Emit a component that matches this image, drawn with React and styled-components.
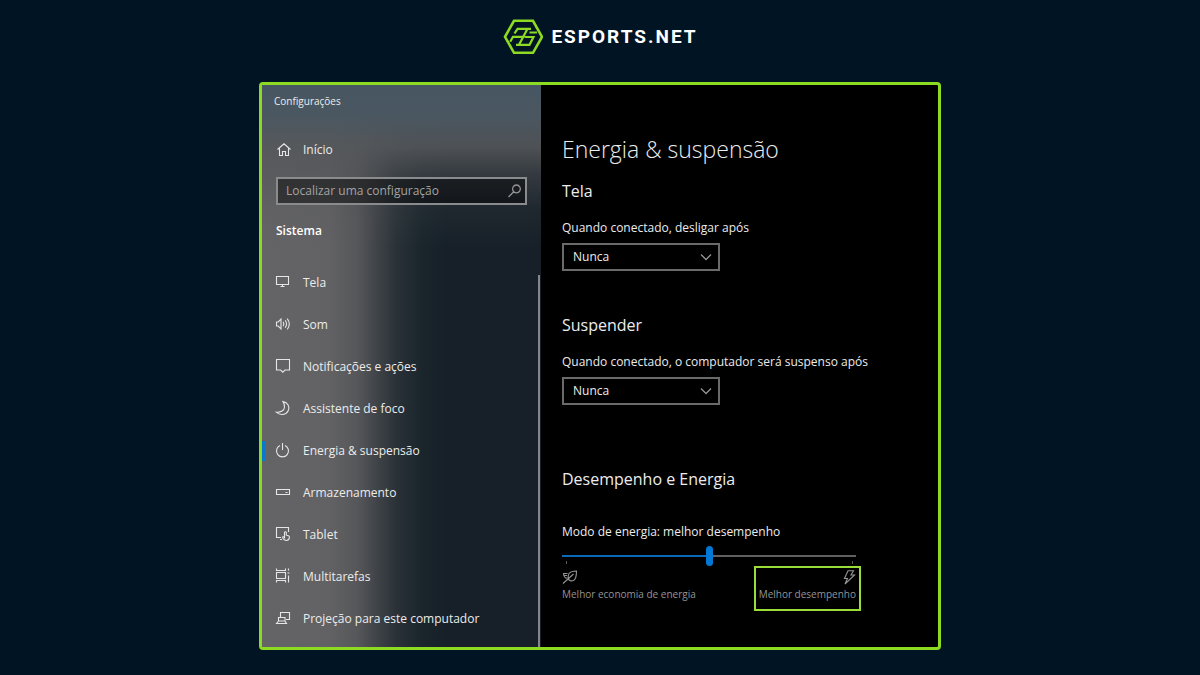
import React from "react";
import styled, { createGlobalStyle } from "styled-components";

const GlobalStyle = createGlobalStyle`
  *, *::before, *::after { box-sizing: border-box; }
  body {
    margin: 0;
    background: #011424;
    color: #ececec;
    font-family: "Open Sans", "Noto Sans", sans-serif;
    font-size: 12px;
    line-height: 20px;
  }
  h1, h2, p { margin: 0; font-weight: 400; }
  input, select { font: inherit; color: inherit; }
`;

const Page = styled.div`
  display: flex;
  flex-direction: column;
  align-items: center;
  padding: 17px 16px 24px;
`;

const Brand = styled.a`
  display: flex;
  align-items: center;
  gap: 8px;
  color: #fff;
  text-decoration: none;
`;

const BrandName = styled.span`
  font-family: Roboto, sans-serif;
  font-size: 19px;
  font-weight: 700;
  letter-spacing: 2px;
  line-height: 24px;
`;

const Window = styled.div`
  display: grid;
  grid-template-columns: 279px minmax(0, 1fr);
  width: 100%;
  max-width: 682px;
  margin-top: 25px;
  border: 3px solid #8cdb22;
  border-radius: 4px;
  background: #000;
`;

const Sidebar = styled.aside`
  display: flex;
  flex-direction: column;
  background:
    linear-gradient(to bottom, #465662 0, #4a5761 5%, rgba(84, 87, 90, 0.9) 11%, rgba(80, 82, 86, 0.5) 16%, rgba(80, 82, 86, 0.15) 22%, rgba(80, 82, 86, 0) 29%),
    linear-gradient(to right, #646466 0, #626264 24%, #56575a 34%, #404448 41%, #2a3238 48%, #1a252c 57%, #172028 66%, #172028 100%);
`;

const AppTitle = styled.p`
  padding: 8px 12px 0;
  font-size: 10px;
  line-height: 16px;
`;

const NavLink = styled.a`
  display: flex;
  align-items: center;
  height: 42px;
  color: inherit;
  text-decoration: none;
`;

const Marker = styled.span`
  width: 3px;
  height: 20px;
  background: ${(p) => (p.$active ? "#0a78c8" : "transparent")};
`;

const Icon = styled.svg`
  flex: none;
  width: 16px;
  height: 16px;
  fill: none;
  stroke: ${(p) => (p.$muted ? "#949494" : "#e6e6e6")};
  stroke-width: 1.1;
  overflow: visible;
`;

const NavIcon = styled(Icon)`
  margin: 0 12px 0 10px;
`;

const HomeSlot = styled.div`
  margin-top: 20px;
`;

const Search = styled.label`
  display: flex;
  align-items: center;
  height: 28px;
  margin: 6px 14px 0;
  padding: 0 3px 0 8px;
  border: 2px solid #8a8b8d;
  background: rgba(0, 0, 0, 0.45);
`;

const SearchInput = styled.input.attrs({ type: "search" })`
  flex: 1;
  min-width: 0;
  padding: 0;
  border: 0;
  outline: 0;
  background: none;
  &::placeholder { color: #a3a3a4; opacity: 1; }
`;

const Category = styled.h2`
  margin: 16px 14px 0;
  color: #fff;
  font-size: 12px;
  font-weight: 600;
`;

const NavArea = styled.div`
  display: flex;
  flex: 1;
  margin-top: 21px;
  padding-right: 1px;
`;

const NavList = styled.nav`
  flex: 1;
  padding-bottom: 6px;
`;

const ScrollThumb = styled.div`
  width: 2px;
  margin-top: 13px;
  background: #84878a;
`;

const Content = styled.main`
  padding: 48px 21px 36px;
`;

const Title = styled.h1`
  font-size: 23px;
  font-weight: 300;
  line-height: 32px;
`;

const Section = styled.section`
  margin-top: ${(p) => p.$gap}px;
`;

const SectionTitle = styled.h2`
  font-size: 16px;
  font-weight: 500;
  line-height: 24px;
`;

const FieldLabel = styled.label`
  display: block;
  margin-top: ${(p) => p.$gap || 15}px;
`;

const SelectBox = styled.div`
  display: grid;
  align-items: center;
  width: 158px;
  margin-top: 5px;
  & > * { grid-area: 1 / 1; }
  & > svg { justify-self: end; margin-right: 6px; pointer-events: none; }
`;

const Select = styled.select`
  appearance: none;
  width: 100%;
  height: 28px;
  padding: 0 9px;
  border: 2px solid #6a6a6a;
  border-radius: 0;
  outline: 0;
  background: #000;
`;

const SliderBlock = styled.div`
  max-width: 299px;
`;

const tick = "linear-gradient(#5c5c5c, #5c5c5c)";

const Slider = styled.input.attrs({ type: "range" })`
  appearance: none;
  display: block;
  width: calc(100% - 5px);
  height: 20px;
  margin: 4px 0 0;
  outline: 0;
  background: ${tick} 4px 15px / 1px 3px no-repeat, ${tick} calc(100% - 3px) 15px / 1px 3px no-repeat;
  &::-webkit-slider-runnable-track {
    height: 2px;
    background: linear-gradient(to right, #0a68b4 50%, #606060 50%);
  }
  &::-webkit-slider-thumb {
    appearance: none;
    width: 7px;
    height: 20px;
    margin-top: -9px;
    border-radius: 4px;
    background: #0078d4;
  }
`;

const SliderEnds = styled.div`
  display: flex;
  justify-content: space-between;
  color: #949494;
  font-size: 10px;
  line-height: 16px;
`;

const SliderEnd = styled.div`
  display: flex;
  flex-direction: column;
  align-items: ${(p) => (p.$highlight ? "flex-end" : "flex-start")};
  padding: ${(p) => (p.$highlight ? "2px 3px 7px" : "4px 0")};
  border: ${(p) => (p.$highlight ? "2px solid #98dd38" : "0")};
`;

const icons = {
  home: <path d="M2.500 7.500 9 1.800l6.500 5.700M4.500 6.500v7h3V9.500h3v4h3v-7" />,
  display: <path d="M1.500 1.500h12v8h-12zM7.500 9.500v2M5.500 11.500h4" />,
  sound: <path d="M1.500 5v4h1.700L6 11.800V2.200L3.200 5zM8.200 4.800q1.300 2.200 0 4.400M10.200 3.200q2.700 3.800 0 7.600M12.200 1.600q4.200 5.400 0 10.800" />,
  message: <path d="M1.500.5h13v10.500H10l-2.200 2.200L5.600 11H1.500z" />,
  moon: <path d="M8 .6C13 1.500 15 6 13.200 9.800 11.300 13.800 5.500 15 1.200 11.200 6 11.600 9.200 9.300 9.500 6.200 9.700 4 9.200 2.300 8 .6z" />,
  power: <path d="M7.500 0v7M5 2.400a6 6 0 1 0 5 0" />,
  storage: <path d="M1.500 4.500h13v5h-13zM10.500 7.500h2" />,
  tablet: <path d="M6 10.500H1.500v-10h12v4.500M5 12.500h2M9.500 9V5.200q.9-.9 1.800 0V8.200l2.200.6q1 .3.900 1.500c-.1 2-.9 3.200-2.900 3.200-1.800 0-2.800-.8-3.600-2.300-.7-1.400.4-2 1.600-.6z" />,
  multitask: <path d="M1.500-.5v2h9v-2M1.500 3.500h9v6h-9zM1.500 13.500v-2h9v2M13.500-.5v2M13.500 6.500v7M12.500 4h2" />,
  project: <path d="M5.500 6V1.500h9v7H11M3.500 6.500H10v3.500H3.500zM3.500 10l-2 2.500h10L10 10" />,
  search: <path d="M10.500 2a3.900 3.900 0 1 1-.1 0zM7.700 8.800 2.500 14" strokeWidth="1.300" />,
  chevron: <path d="m3 5.500 5 5 5-5" strokeWidth="1.300" />,
  leaf: <path d="M7 3.500C9 1 12 1 14.500 1c0 4 0 8-3 9.500-2.500 1-4.500 0-5-1.500C6 7 6 5 7 3.500zM11.500 4 1 13.500M5.500 3.500h-4c0 2 .5 3.500 2 4.500h2M2 5.500h3" />,
  bolt: <path d="M8 .8h5.500L11 5h3.500L5 14l2.500-5.500H4.500z" />,
};

const navItems = [
  { icon: "display", label: "Tela" },
  { icon: "sound", label: "Som" },
  { icon: "message", label: "Notificações e ações" },
  { icon: "moon", label: "Assistente de foco" },
  { icon: "power", label: "Energia & suspensão", active: true },
  { icon: "storage", label: "Armazenamento" },
  { icon: "tablet", label: "Tablet" },
  { icon: "multitask", label: "Multitarefas" },
  { icon: "project", label: "Projeção para este computador" },
];

function Glyph({ name, muted }) {
  return <Icon viewBox="0 0 16 16" $muted={muted} aria-hidden="true">{icons[name]}</Icon>;
}

function NavItem({ icon, label, active }) {
  return (
    <NavLink href="#" aria-current={active ? "page" : undefined}>
      <Marker $active={active} />
      <NavIcon viewBox="0 0 16 16" aria-hidden="true">{icons[icon]}</NavIcon>
      {label}
    </NavLink>
  );
}

function SelectField({ id, label }) {
  return (
    <>
      <FieldLabel htmlFor={id}>{label}</FieldLabel>
      <SelectBox>
        <Select id={id} defaultValue="Nunca">
          <option>Nunca</option>
        </Select>
        <Glyph name="chevron" muted />
      </SelectBox>
    </>
  );
}

export default function App() {
  return (
    <>
      <GlobalStyle />
      <Page>
        <Brand href="#">
          <svg width="41" height="40" viewBox="0 0 41 40" fill="none" stroke="#8cdb22" strokeWidth="2.600" aria-hidden="true">
            <path d="M12 3.800h19l9 16-9 16H12l-9-16z" />
            <path d="M29 11.800H15.500L12.500 16.500M25.500 11.800 17 27.800M20.500 19.800H11L8.200 24.800M14 27.800H27.500L31.500 20H22.500M35 15.500H27.500" strokeWidth="2.200" />
          </svg>
          <BrandName>ESPORTS.NET</BrandName>
        </Brand>
        <Window>
          <Sidebar>
            <AppTitle>Configurações</AppTitle>
            <HomeSlot>
              <NavItem icon="home" label="Início" />
            </HomeSlot>
            <Search>
              <SearchInput placeholder="Localizar uma configuração" aria-label="Localizar uma configuração" />
              <Glyph name="search" muted />
            </Search>
            <Category>Sistema</Category>
            <NavArea>
              <NavList>
                {navItems.map((item) => <NavItem key={item.label} {...item} />)}
              </NavList>
              <ScrollThumb />
            </NavArea>
          </Sidebar>
          <Content>
            <Title>Energia &amp; suspensão</Title>
            <Section $gap={14}>
              <SectionTitle>Tela</SectionTitle>
              <SelectField id="screen-off" label="Quando conectado, desligar após" />
            </Section>
            <Section $gap={42}>
              <SectionTitle>Suspender</SectionTitle>
              <SelectField id="sleep" label="Quando conectado, o computador será suspenso após" />
            </Section>
            <Section $gap={62}>
              <SectionTitle>Desempenho e Energia</SectionTitle>
              <FieldLabel htmlFor="power-mode" $gap={31}>Modo de energia: melhor desempenho</FieldLabel>
              <SliderBlock>
                <Slider id="power-mode" min="0" max="2" defaultValue="1" />
                <SliderEnds>
                  <SliderEnd>
                    <Glyph name="leaf" muted />
                    <span>Melhor economia de energia</span>
                  </SliderEnd>
                  <SliderEnd $highlight>
                    <Glyph name="bolt" muted />
                    <span>Melhor desempenho</span>
                  </SliderEnd>
                </SliderEnds>
              </SliderBlock>
            </Section>
          </Content>
        </Window>
      </Page>
    </>
  );
}
